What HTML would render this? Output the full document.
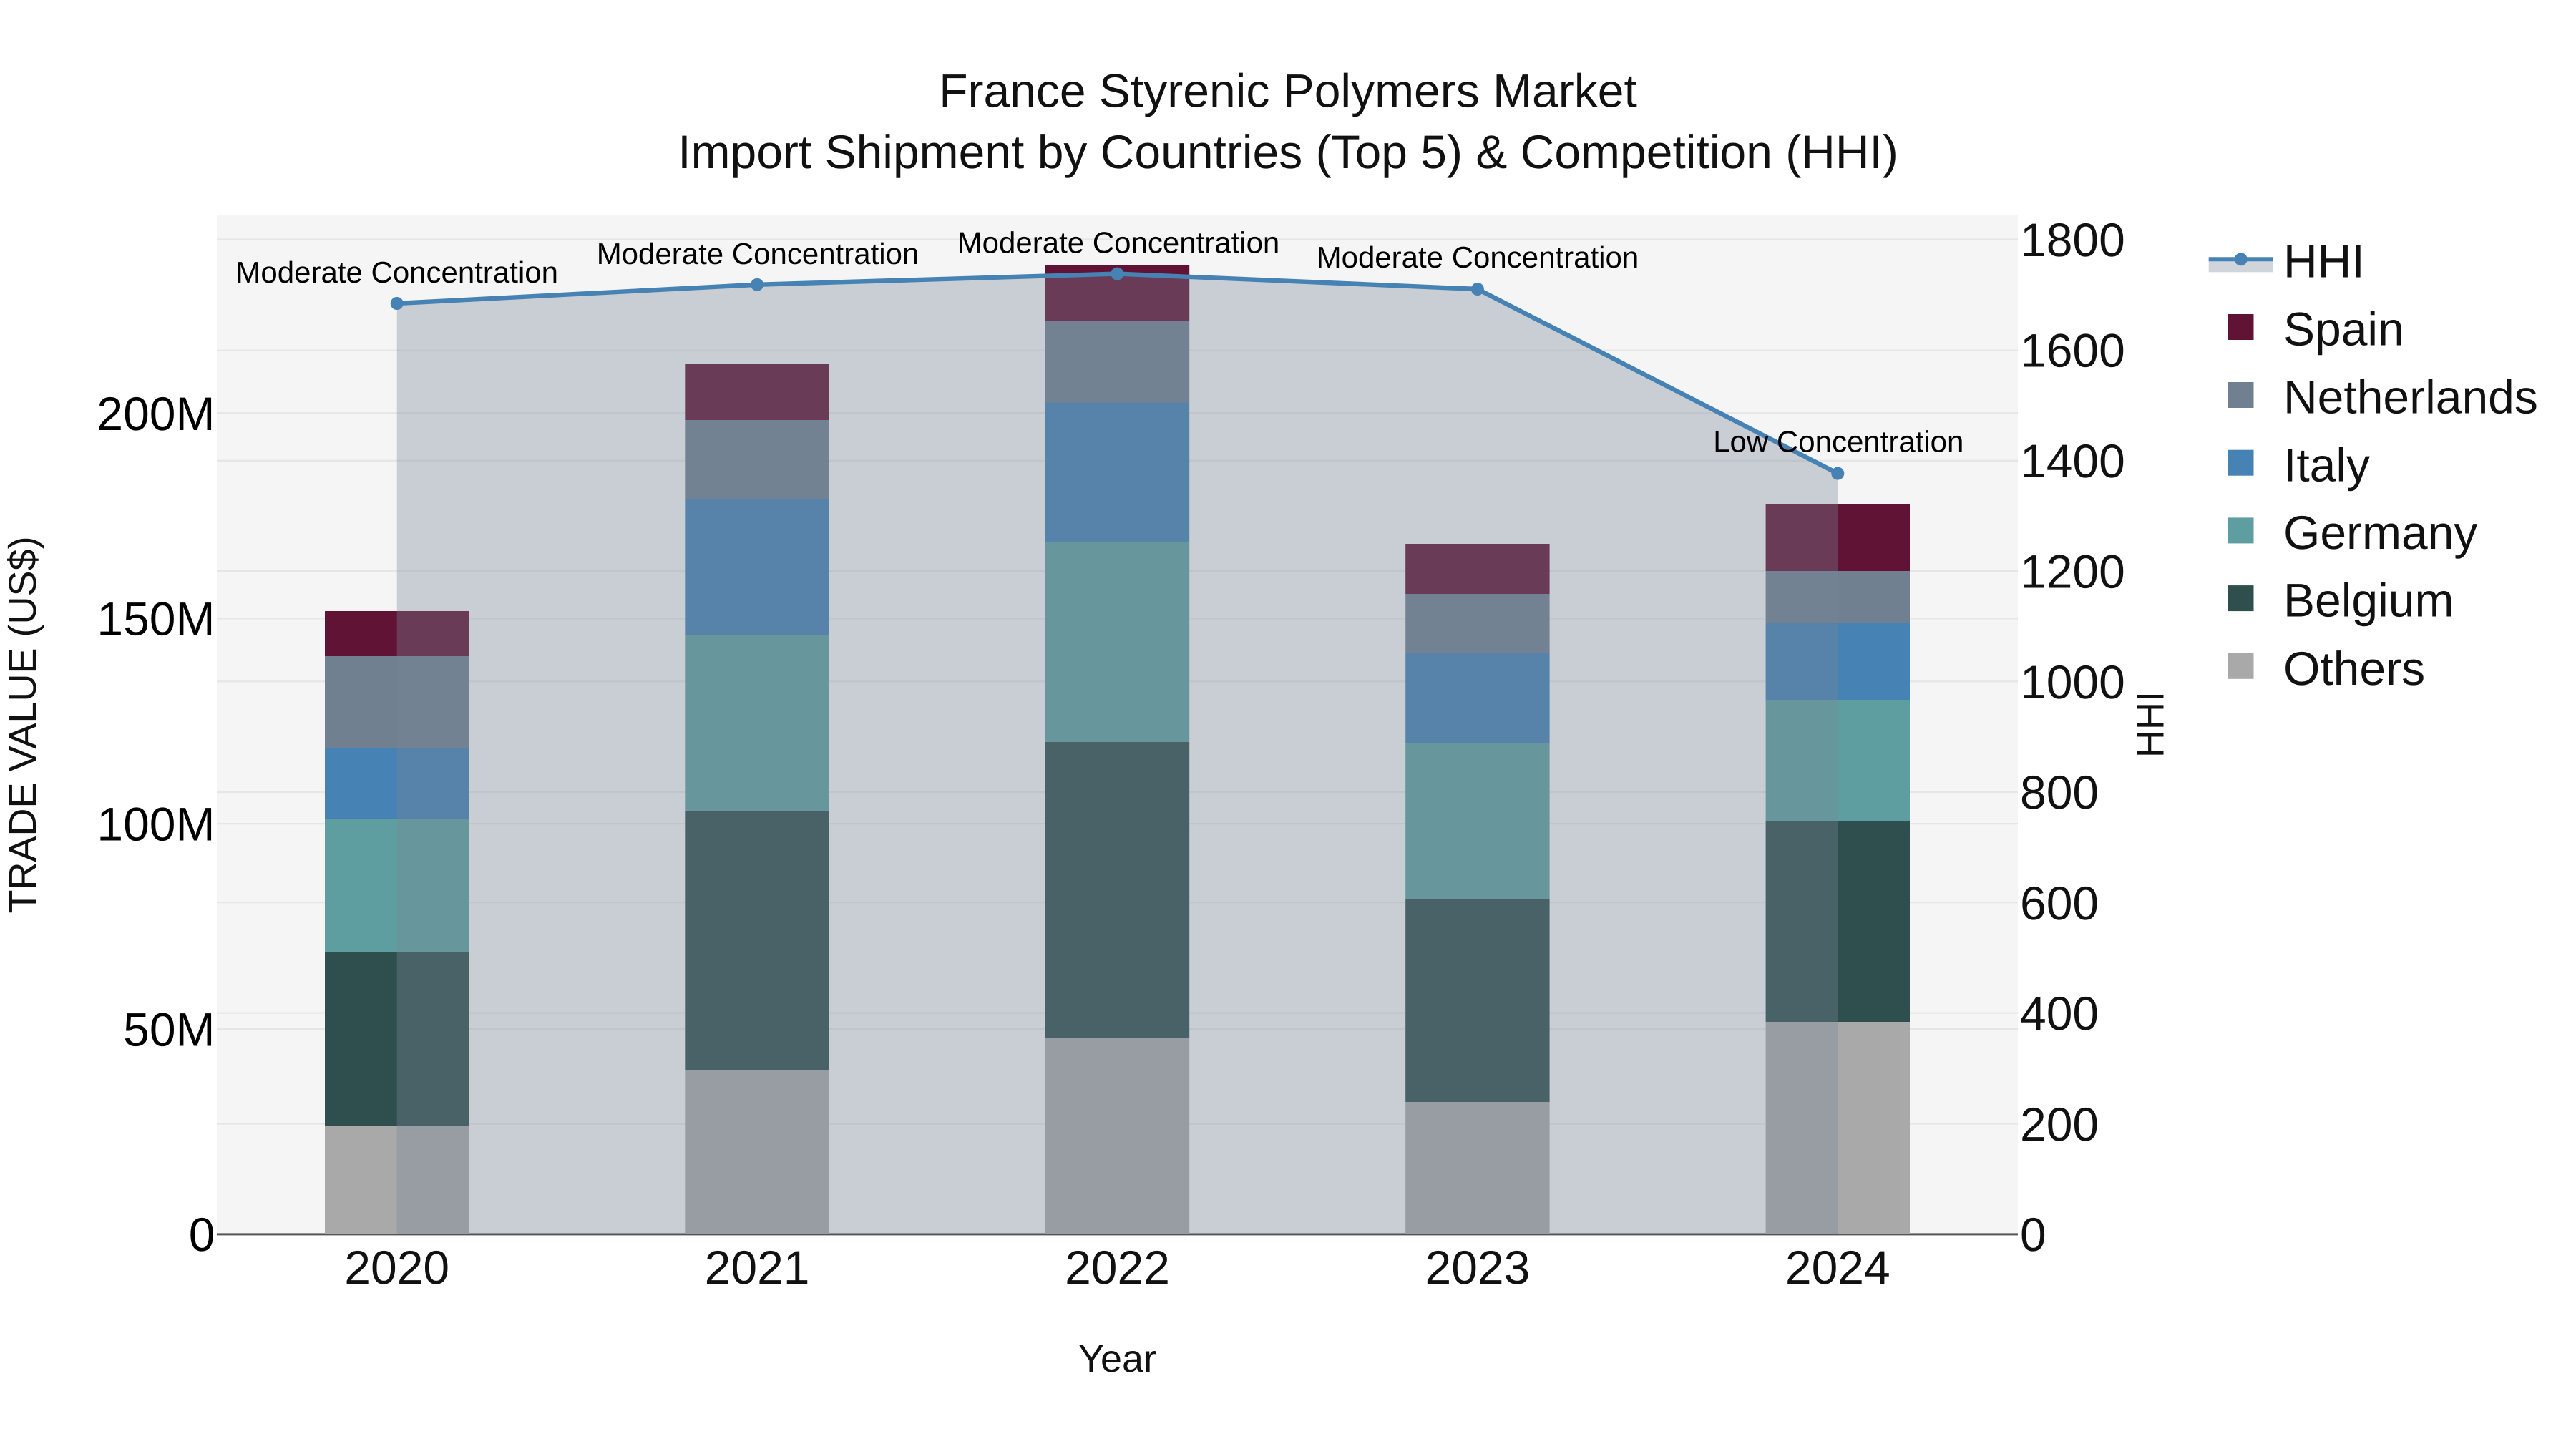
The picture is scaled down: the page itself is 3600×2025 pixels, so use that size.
<!DOCTYPE html>
<html lang="en">
<head>
<meta charset="utf-8">
<title>France Styrenic Polymers Market</title>
<style>
html,body{margin:0;padding:0;background:#fff;width:3600px;height:2025px;overflow:hidden}
svg{display:block}
text{font-family:"Liberation Sans",Arial,sans-serif;text-rendering:geometricPrecision;fill:#111}
.t{font-size:66px}
.k{font-size:66px}
.a{font-size:42px;fill:#000;text-anchor:middle}
.l{font-size:66px}
.g{font-size:54px;text-anchor:middle}
</style>
</head>
<body>
<svg width="3600" height="2025" viewBox="0 0 3600 2025" xmlns="http://www.w3.org/2000/svg">
<rect width="3600" height="2025" fill="#fff"/>
<rect x="303" y="300" width="2517" height="1425" fill="#f5f5f5"/>
<g fill="#e6e6e6">
<rect x="303" y="333.4" width="2517" height="2.25"/>
<rect x="303" y="488.6" width="2517" height="2.25"/>
<rect x="303" y="576.1" width="2517" height="2.25"/>
<rect x="303" y="642.7" width="2517" height="2.25"/>
<rect x="303" y="796.9" width="2517" height="2.25"/>
<rect x="303" y="863.2" width="2517" height="2.25"/>
<rect x="303" y="951.2" width="2517" height="2.25"/>
<rect x="303" y="1105.9" width="2517" height="2.25"/>
<rect x="303" y="1150" width="2517" height="2.25"/>
<rect x="303" y="1260" width="2517" height="2.25"/>
<rect x="303" y="1414.5" width="2517" height="2.25"/>
<rect x="303" y="1437" width="2517" height="2.25"/>
<rect x="303" y="1569.4" width="2517" height="2.25"/>
</g>
<rect x="303" y="1723.4" width="2517" height="3" fill="#555"/>
<!-- 2020 -->
<g>
<rect x="454" y="1574" width="201.4" height="151" fill="#a9a9a9"/>
<rect x="454" y="1330" width="201.4" height="244" fill="#2f4f4f"/>
<rect x="454" y="1144" width="201.4" height="186" fill="#5f9ea0"/>
<rect x="454" y="1045" width="201.4" height="99" fill="#4682b4"/>
<rect x="454" y="917" width="201.4" height="128" fill="#708090"/>
<rect x="454" y="854" width="201.4" height="63" fill="#611335"/>
</g>
<!-- 2021 -->
<g>
<rect x="957.3" y="1496" width="201.4" height="229" fill="#a9a9a9"/>
<rect x="957.3" y="1134" width="201.4" height="362" fill="#2f4f4f"/>
<rect x="957.3" y="887" width="201.4" height="247" fill="#5f9ea0"/>
<rect x="957.3" y="698" width="201.4" height="189" fill="#4682b4"/>
<rect x="957.3" y="587" width="201.4" height="111" fill="#708090"/>
<rect x="957.3" y="509" width="201.4" height="78" fill="#611335"/>
</g>
<!-- 2022 -->
<g>
<rect x="1460.8" y="1451" width="201.4" height="274" fill="#a9a9a9"/>
<rect x="1460.8" y="1037" width="201.4" height="414" fill="#2f4f4f"/>
<rect x="1460.8" y="758" width="201.4" height="279" fill="#5f9ea0"/>
<rect x="1460.8" y="562.5" width="201.4" height="195.5" fill="#4682b4"/>
<rect x="1460.8" y="449" width="201.4" height="113.5" fill="#708090"/>
<rect x="1460.8" y="371" width="201.4" height="78" fill="#611335"/>
</g>
<!-- 2023 -->
<g>
<rect x="1964.2" y="1540" width="201.4" height="185" fill="#a9a9a9"/>
<rect x="1964.2" y="1256" width="201.4" height="284" fill="#2f4f4f"/>
<rect x="1964.2" y="1039" width="201.4" height="217" fill="#5f9ea0"/>
<rect x="1964.2" y="913" width="201.4" height="126" fill="#4682b4"/>
<rect x="1964.2" y="830" width="201.4" height="83" fill="#708090"/>
<rect x="1964.2" y="760" width="201.4" height="70" fill="#611335"/>
</g>
<!-- 2024 -->
<g>
<rect x="2467.6" y="1428" width="201.4" height="297" fill="#a9a9a9"/>
<rect x="2467.6" y="1147" width="201.4" height="281" fill="#2f4f4f"/>
<rect x="2467.6" y="978" width="201.4" height="169" fill="#5f9ea0"/>
<rect x="2467.6" y="870" width="201.4" height="108" fill="#4682b4"/>
<rect x="2467.6" y="798" width="201.4" height="72" fill="#708090"/>
<rect x="2467.6" y="705" width="201.4" height="93" fill="#611335"/>
</g>
<!-- HHI area + line -->
<polygon points="554.7,424 1058.1,397.8 1561.5,382.6 2064.9,404 2568.3,661.6 2568.3,1725 554.7,1725" fill="#778899" fill-opacity="0.35"/>
<polyline points="554.7,424 1058.1,397.8 1561.5,382.6 2064.9,404 2568.3,661.6" fill="none" stroke="#4682b4" stroke-width="6.4" stroke-linejoin="round"/>
<g fill="#4682b4">
<circle cx="554.7" cy="424" r="9"/>
<circle cx="1058.1" cy="397.8" r="9"/>
<circle cx="1561.5" cy="382.6" r="9"/>
<circle cx="2064.9" cy="404" r="9"/>
<circle cx="2568.3" cy="661.6" r="9"/>
</g>
<!-- annotations -->
<text class="a" x="554.7" y="395">Moderate Concentration</text>
<text class="a" x="1059" y="368.8">Moderate Concentration</text>
<text class="a" x="1563" y="353.6">Moderate Concentration</text>
<text class="a" x="2064.9" y="374">Moderate Concentration</text>
<text class="a" x="2569.3" y="631.7">Low Concentration</text>
<!-- title -->
<text class="t" x="1800" y="149.5" text-anchor="middle">France Styrenic Polymers Market</text>
<text class="t" x="1800" y="235" text-anchor="middle">Import Shipment by Countries (Top 5) &amp; Competition (HHI)</text>
<!-- left ticks -->
<g text-anchor="end" style="fill:#000">
<text class="k" x="300.5" y="600.8" style="fill:#000">200M</text>
<text class="k" x="300.5" y="887.6" style="fill:#000">150M</text>
<text class="k" x="300.5" y="1174.6" style="fill:#000">100M</text>
<text class="k" x="300.5" y="1461.4" style="fill:#000">50M</text>
<text class="k" x="300.5" y="1748" style="fill:#000">0</text>
</g>
<!-- right ticks -->
<g>
<text class="k" x="2823" y="358">1800</text>
<text class="k" x="2823" y="512.5">1600</text>
<text class="k" x="2823" y="667">1400</text>
<text class="k" x="2823" y="821.5">1200</text>
<text class="k" x="2823" y="976">1000</text>
<text class="k" x="2823" y="1130">800</text>
<text class="k" x="2823" y="1285">600</text>
<text class="k" x="2823" y="1439">400</text>
<text class="k" x="2823" y="1594">200</text>
<text class="k" x="2823" y="1748">0</text>
</g>
<!-- x ticks -->
<g text-anchor="middle">
<text class="k" x="554.7" y="1794">2020</text>
<text class="k" x="1058.1" y="1794">2021</text>
<text class="k" x="1561.5" y="1794">2022</text>
<text class="k" x="2064.9" y="1794">2023</text>
<text class="k" x="2568.3" y="1794">2024</text>
</g>
<!-- axis titles -->
<text class="g" x="1561.5" y="1917">Year</text>
<text class="g" transform="translate(50 1013) rotate(-90)">TRADE VALUE (US$)</text>
<text class="g" transform="translate(3023.5 1012.5) rotate(-90)">HHI</text>
<!-- legend -->
<rect x="3086.7" y="362" width="90" height="18.3" fill="#778899" fill-opacity="0.35"/>
<line x1="3086.7" y1="362.3" x2="3176.7" y2="362.3" stroke="#4682b4" stroke-width="6"/>
<circle cx="3131.7" cy="362.3" r="9" fill="#4682b4"/>
<rect x="3113.5" y="439" width="36" height="36" fill="#611335"/>
<rect x="3113.5" y="534" width="36" height="36" fill="#708090"/>
<rect x="3113.5" y="628.7" width="36" height="36" fill="#4682b4"/>
<rect x="3113.5" y="723.4" width="36" height="36" fill="#5f9ea0"/>
<rect x="3113.5" y="818.1" width="36" height="36" fill="#2f4f4f"/>
<rect x="3113.5" y="912.8" width="36" height="36" fill="#a9a9a9"/>
<text class="l" x="3191" y="387.5">HHI</text>
<text class="l" x="3191" y="482.7">Spain</text>
<text class="l" x="3191" y="577.4">Netherlands</text>
<text class="l" x="3191" y="672.5">Italy</text>
<text class="l" x="3191" y="766.8">Germany</text>
<text class="l" x="3191" y="861.5">Belgium</text>
<text class="l" x="3191" y="957">Others</text>
</svg>
</body>
</html>
